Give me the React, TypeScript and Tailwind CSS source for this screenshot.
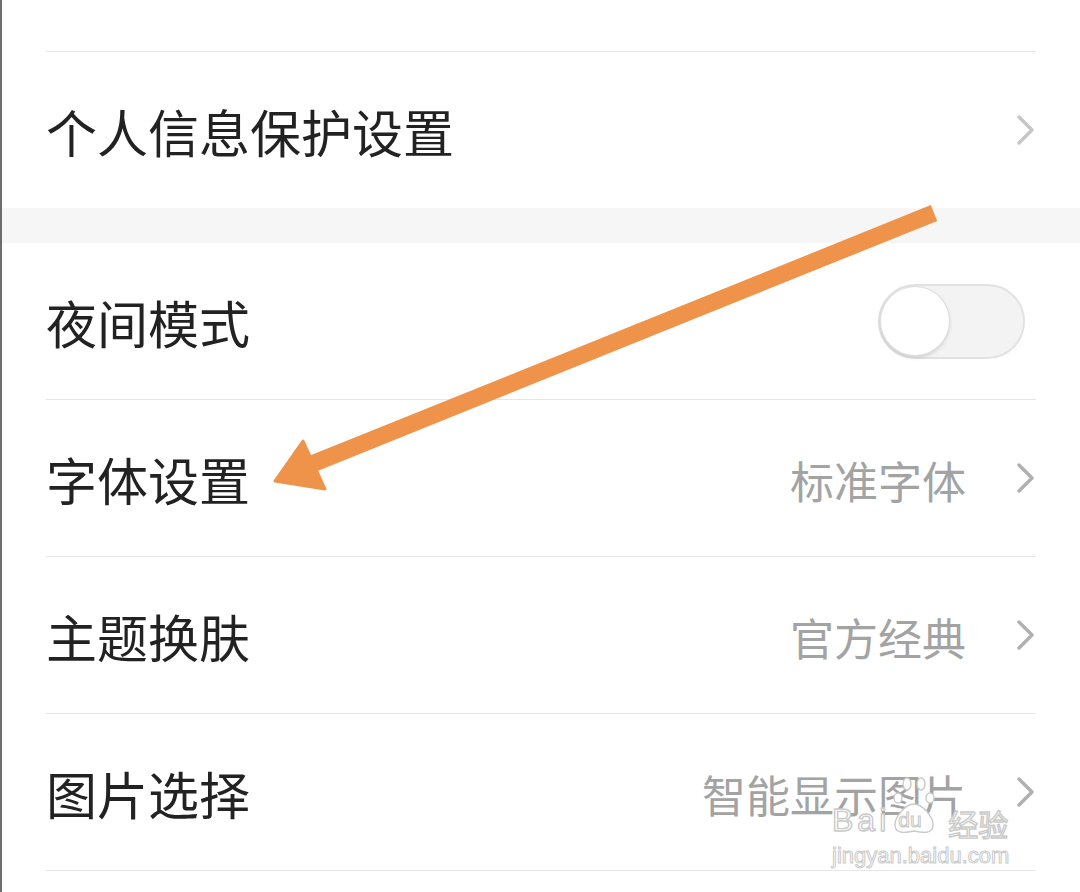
import React from 'react';

const cjk = "font-['Noto_Sans_CJK_SC','Noto_Sans',sans-serif]";

const Chevron: React.FC<{ light?: boolean }> = ({ light }) => (
  <svg width="20" height="30" viewBox="0 0 20 30" className="shrink-0">
    <path
      d="M3 2 L16 15 L3 28"
      fill="none"
      stroke={light ? '#c6c6c6' : '#b0b0b0'}
      strokeWidth="3.4"
      strokeLinecap="round"
      strokeLinejoin="round"
    />
  </svg>
);

const Toggle: React.FC = () => (
  <div className="mr-[11px] flex h-[75px] w-[147px] items-center rounded-full border-2 border-[#e2e2e2] bg-[#f3f3f3] pl-[1px]">
    <div className="h-[68px] w-[68px] rounded-full bg-white shadow-[0_2px_4px_rgba(0,0,0,0.18)] ring-1 ring-[#dedede]" />
  </div>
);

type RowProps = {
  label: string;
  value?: string;
  toggle?: boolean;
  border?: boolean;
  light?: boolean;
  height?: string;
};

const Row: React.FC<RowProps> = ({ label, value, toggle, border = true, light, height = 'h-[157px]' }) => (
  <div className={`mx-[44px] flex ${height} items-center justify-between ${border ? 'border-b border-[#e6e6e6]' : ''}`}>
    <span className={`${cjk} pt-[2px] text-[51px] leading-none text-[#222]`}>{label}</span>
    {toggle ? (
      <Toggle />
    ) : (
      <div className="flex items-center">
        {value && (
          <span className={`${cjk} mr-[50px] pt-[4px] text-[44px] leading-none text-[#a3a3a3]`}>{value}</span>
        )}
        <Chevron light={light} />
      </div>
    )}
  </div>
);

const Watermark: React.FC = () => (
  <div className="pointer-events-none absolute left-[830px] top-[776px] flex flex-col items-start">
    <div className="flex items-end">
      <span className="font-['Liberation_Sans',sans-serif] text-[32px] leading-none tracking-[4px] text-white [-webkit-text-stroke:1.4px_#cacaca]">
        Bai
      </span>
      <div className="relative h-[60px] w-[48px]">
        <svg width="48" height="60" viewBox="0 0 48 60" className="absolute inset-0">
          <g fill="white" stroke="#cacaca" strokeWidth="1.4">
            <ellipse cx="8" cy="22" rx="4" ry="5" />
            <ellipse cx="17" cy="8" rx="4" ry="6" />
            <ellipse cx="31" cy="8" rx="4" ry="6" />
            <ellipse cx="40" cy="22" rx="4" ry="5" />
            <path d="M24 28 C15 28 4 42 5 50 C6 58 15 57 24 55 C33 57 42 58 43 50 C44 42 33 28 24 28 Z" />
          </g>
        </svg>
        <span className="absolute left-[8px] top-[33px] font-['Liberation_Sans',sans-serif] text-[21px] leading-none text-white [-webkit-text-stroke:1.1px_#cacaca]">
          du
        </span>
      </div>
      <span className={`${cjk} ml-[10px] mb-[-2px] text-[30px] leading-none text-white [-webkit-text-stroke:1.4px_#cacaca]`}>
        经验
      </span>
    </div>
    <span className="mt-[9px] font-['Liberation_Sans',sans-serif] text-[22px] leading-none text-white [-webkit-text-stroke:1px_#cacaca]">
      jingyan.baidu.com
    </span>
  </div>
);

const Arrow: React.FC = () => (
  <svg className="pointer-events-none absolute inset-0" width="1080" height="892" viewBox="0 0 1080 892">
    <line x1="932" y1="213" x2="305" y2="466" stroke="#f0934a" strokeWidth="17" />
    <polygon points="273,481 301,441 323,489" fill="#f0934a" stroke="#f0934a" strokeWidth="3" strokeLinejoin="round" />
  </svg>
);

export default function App() {
  return (
    <div className="relative h-[892px] w-[1080px] overflow-hidden border-l-2 border-[#6e6e6e] bg-white">
      <div className="mx-[44px] h-[52px] border-b border-[#e6e6e6]" />
      <Row label="个人信息保护设置" border={false} light height="h-[156px]" />
      <div className="h-[35px] bg-[#f6f6f6]" />
      <Row label="夜间模式" toggle />
      <Row label="字体设置" value="标准字体" />
      <Row label="主题换肤" value="官方经典" />
      <Row label="图片选择" value="智能显示图片" />
      <Arrow />
      <Watermark />
    </div>
  );
}
